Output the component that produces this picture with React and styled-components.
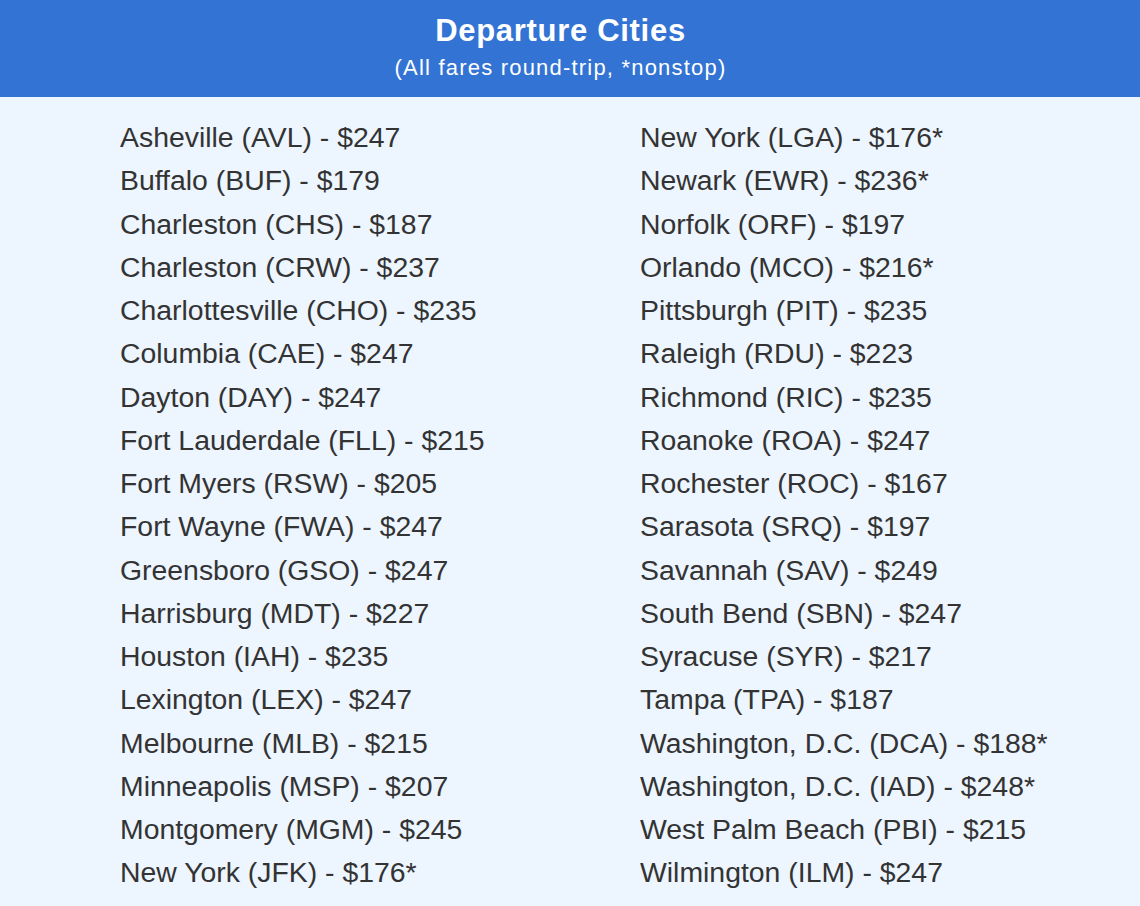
import styled, { createGlobalStyle } from "styled-components";

const GlobalStyle = createGlobalStyle`
    html, body {
        margin: 0;
        padding: 0;
        background: #edf5ff;
    }
`;

const left = [
    "Asheville (AVL) - $247",
    "Buffalo (BUF) - $179",
    "Charleston (CHS) - $187",
    "Charleston (CRW) - $237",
    "Charlottesville (CHO) - $235",
    "Columbia (CAE) - $247",
    "Dayton (DAY) - $247",
    "Fort Lauderdale (FLL) - $215",
    "Fort Myers (RSW) - $205",
    "Fort Wayne (FWA) - $247",
    "Greensboro (GSO) - $247",
    "Harrisburg (MDT) - $227",
    "Houston (IAH) - $235",
    "Lexington (LEX) - $247",
    "Melbourne (MLB) - $215",
    "Minneapolis (MSP) - $207",
    "Montgomery (MGM) - $245",
    "New York (JFK) - $176*",
];

const right = [
    "New York (LGA) - $176*",
    "Newark (EWR) - $236*",
    "Norfolk (ORF) - $197",
    "Orlando (MCO) - $216*",
    "Pittsburgh (PIT) - $235",
    "Raleigh (RDU) - $223",
    "Richmond (RIC) - $235",
    "Roanoke (ROA) - $247",
    "Rochester (ROC) - $167",
    "Sarasota (SRQ) - $197",
    "Savannah (SAV) - $249",
    "South Bend (SBN) - $247",
    "Syracuse (SYR) - $217",
    "Tampa (TPA) - $187",
    "Washington, D.C. (DCA) - $188*",
    "Washington, D.C. (IAD) - $248*",
    "West Palm Beach (PBI) - $215",
    "Wilmington (ILM) - $247",
];

const Page = styled.div`
    width: 1140px;
    height: 906px;
    background: #edf5ff;
    overflow: hidden;
`;

const Header = styled.header`
    height: 97px;
    background: #3273d4;
    color: #fff;
    font-family: "Liberation Sans", Arial, sans-serif;
    display: flex;
    flex-direction: column;
    align-items: center;
    box-sizing: border-box;
    padding: 13px 19px 0 0;
    h1 {
        margin: 0;
        font-size: 31px;
        line-height: 36px;
        font-weight: 700;
        letter-spacing: 0.7px;
    }
    p {
        margin: 5px 0 0;
        font-size: 22px;
        line-height: 28px;
        letter-spacing: 1.2px;
    }
`;

const Columns = styled.div`
    display: grid;
    grid-template-columns: 520px 1fr;
    padding: 19px 0 0 120px;
`;

const List = styled.ul`
    list-style: none;
    margin: 0;
    padding: 0;
`;

const Item = styled.li`
    font-family: "Liberation Sans", Arial, sans-serif;
    font-size: 28.4px;
    line-height: 43.25px;
    color: #333;
    white-space: nowrap;
`;

function App() {
    return (
        <Page>
            <GlobalStyle />
            <Header>
                <h1>Departure Cities</h1>
                <p>(All fares round-trip, *nonstop)</p>
            </Header>
            <Columns>
                <List>
                    {left.map((c) => (
                        <Item key={c}>{c}</Item>
                    ))}
                </List>
                <List>
                    {right.map((c) => (
                        <Item key={c}>{c}</Item>
                    ))}
                </List>
            </Columns>
        </Page>
    );
}

export default App;
